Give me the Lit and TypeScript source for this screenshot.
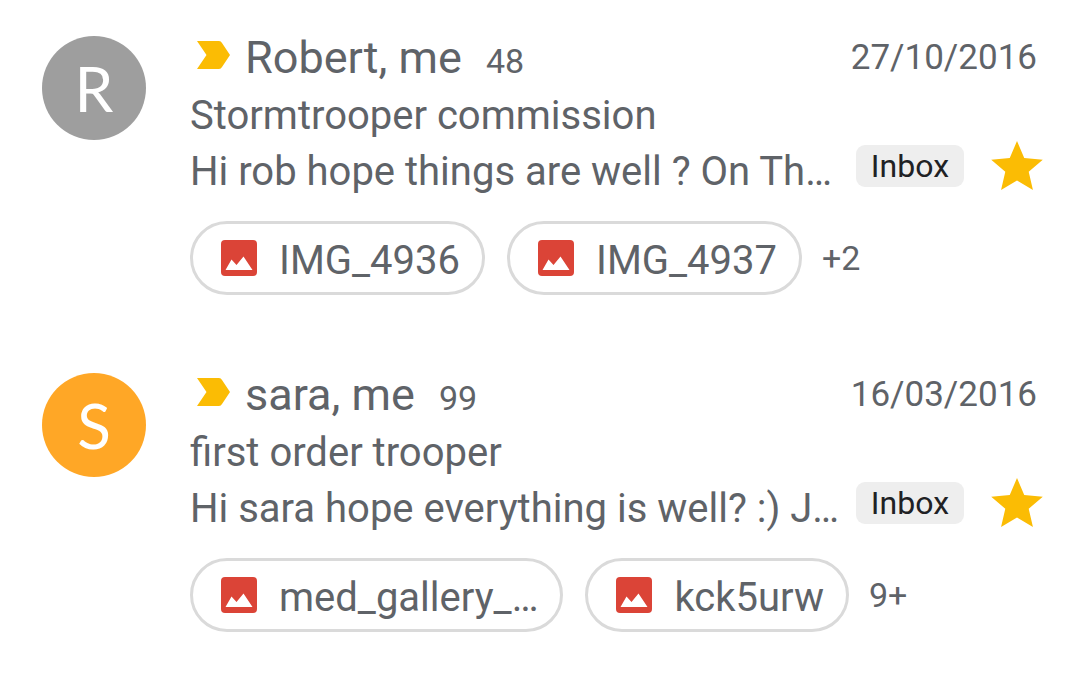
import { LitElement, html, css } from "lit";
import { customElement, property } from "lit/decorators.js";

interface Thread {
  initial: string;
  tone: string;
  senders: string;
  count: number;
  date: string;
  subject: string;
  snippet: string;
  files: string[];
  more: string;
}

const THREADS: Thread[] = [
  {
    initial: "R",
    tone: "grey",
    senders: "Robert, me",
    count: 48,
    date: "27/10/2016",
    subject: "Stormtrooper commission",
    snippet: "Hi rob hope things are well ? On Th…",
    files: ["IMG_4936", "IMG_4937"],
    more: "+2",
  },
  {
    initial: "S",
    tone: "orange",
    senders: "sara, me",
    count: 99,
    date: "16/03/2016",
    subject: "first order trooper",
    snippet: "Hi sara hope everything is well? :) J…",
    files: ["med_gallery_…", "kck5urw"],
    more: "9+",
  },
];

@customElement("mail-thread")
export class MailThread extends LitElement {
  @property({ attribute: false }) thread!: Thread;

  static styles = css`
    :host {
      display: block;
    }
    .thread {
      display: flex;
      gap: 44px;
      padding: 31px 32px 42px 42px;
    }
    .avatar {
      flex: none;
      display: flex;
      align-items: center;
      justify-content: center;
      width: 104px;
      height: 104px;
      margin-top: 5px;
      border-radius: 50%;
      color: #fff;
    }
    .letter {
      font: 62px/72px Lato, sans-serif;
    }
    .grey {
      background: #9e9e9e;
    }
    .orange {
      background: #ffa726;
    }
    .body {
      flex: 1;
      min-width: 0;
    }
    .head {
      display: flex;
      align-items: baseline;
      line-height: 54px;
      padding-left: 7px;
    }
    .marker {
      flex: none;
      width: 34px;
      height: 32px;
      margin-right: 14px;
    }
    .senders {
      font-size: 45px;
      font-weight: 400;
      line-height: 54px;
      margin: 0;
    }
    .count {
      font-size: 34px;
      line-height: 40px;
      margin-left: 24px;
    }
    .date {
      align-self: flex-start;
      font-size: 35px;
      margin-left: auto;
      padding-right: 6px;
    }
    .subject,
    .snippet {
      margin: 0;
      font-size: 40px;
      white-space: nowrap;
      overflow: hidden;
      text-overflow: ellipsis;
    }
    .subject {
      line-height: 62px;
    }
    .preview {
      display: flex;
      align-items: flex-start;
    }
    .snippet {
      flex: 1;
      min-width: 0;
      line-height: 50px;
    }
    .actions {
      flex: none;
      display: flex;
      align-items: center;
      gap: 27px;
      margin-top: -6px;
    }
    .label {
      padding: 0 15px;
      border-radius: 9px;
      background: #eee;
      color: #202124;
      font-size: 32px;
      line-height: 42px;
    }
    button {
      font: inherit;
      color: inherit;
      cursor: pointer;
    }
    .star {
      display: flex;
      padding: 0;
      border: 0;
      background: none;
    }
    .star svg {
      width: 52px;
      height: 49px;
    }
    .files {
      display: flex;
      align-items: center;
      gap: 20px;
      margin-top: 24px;
    }
    .chips {
      display: flex;
      gap: 22px;
    }
    .chip {
      display: flex;
      align-items: center;
      gap: 22px;
      height: 74px;
      padding: 0 22px 0 28px;
      border: 3px solid #dadada;
      border-radius: 37px;
      background: #fff;
      font-size: 40px;
    }
    .chip svg {
      width: 36px;
      height: 36px;
    }
    .name {
      padding-top: 4px;
    }
    .more {
      font-size: 34px;
    }
  `;

  render() {
    const t = this.thread;
    return html`
      <article class="thread">
        <div class="avatar ${t.tone}"><span class="letter">${t.initial}</span></div>
        <div class="body">
          <div class="head">
            <svg class="marker" viewBox="0 0 34 32" aria-hidden="true">
              <path fill="#fbbc04" d="M0 0H22Q24 0 25 2L33 14L25 26Q24 28 22 28H0L9.5 14Z" />
            </svg>
            <h2 class="senders">${t.senders}</h2>
            <span class="count">${t.count}</span>
            <time class="date">${t.date}</time>
          </div>
          <p class="subject">${t.subject}</p>
          <div class="preview">
            <p class="snippet">${t.snippet}</p>
            <div class="actions">
              <span class="label">Inbox</span>
              <button class="star" aria-label="Starred">
                <svg viewBox="2 2 20 19" aria-hidden="true">
                  <path fill="#fbbc04" d="M12 17.27L18.18 21l-1.64-7.03L22 9.24l-7.19-.61L12 2 9.19 8.63 2 9.24l5.46 4.73L5.82 21z" />
                </svg>
              </button>
            </div>
          </div>
          <div class="files">
            <div class="chips">
              ${t.files.map(
                (name) => html`<button class="chip">
                  <svg viewBox="0 0 36 36" aria-hidden="true">
                    <rect width="36" height="36" rx="4" fill="#db4437" />
                    <path fill="#fff" d="M4.5 30L10.5 19.5L15.5 25L22.5 16.5L31.5 30Z" />
                  </svg>
                  <span class="name">${name}</span>
                </button>`
              )}
            </div>
            <span class="more">${t.more}</span>
          </div>
        </div>
      </article>
    `;
  }
}

@customElement("app-root")
export class AppRoot extends LitElement {
  static styles = css`
    :host {
      display: block;
      min-height: 100vh;
      background: #fff;
      color: #5f6368;
      font-family: Roboto, sans-serif;
    }
  `;

  render() {
    return html`<main>${THREADS.map((t) => html`<mail-thread .thread=${t}></mail-thread>`)}</main>`;
  }
}
